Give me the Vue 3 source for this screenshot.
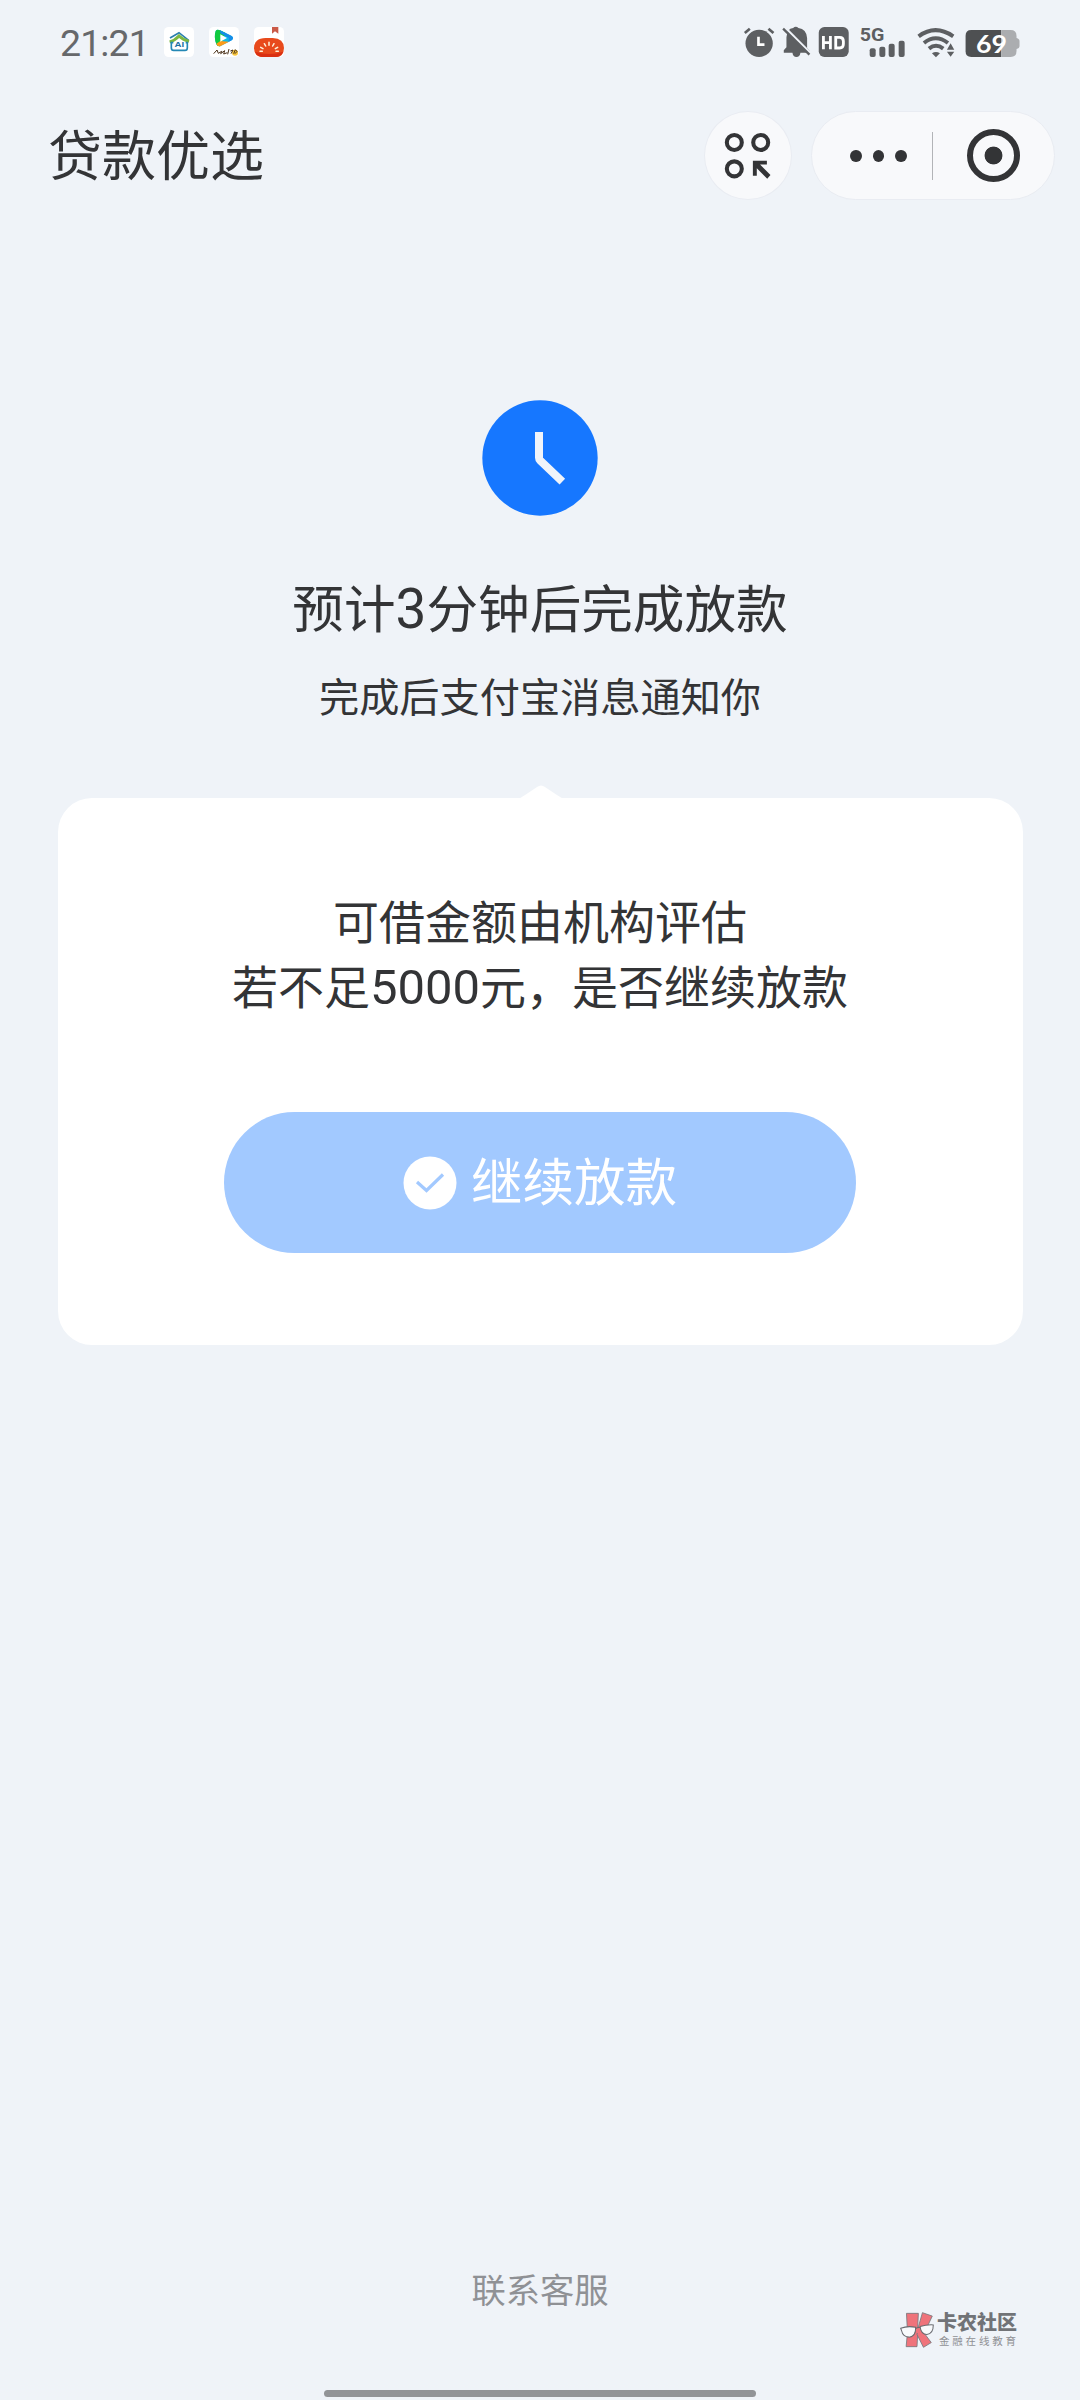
<script setup>
const title = '贷款优选'
const question = ['可借金额由机构评估']
</script>

<template>
  <div class="page">
    <div class="status">
      <span class="time">21:21</span>
      <div class="apps">
        <svg class="app" viewBox="0 0 90 90">
          <rect width="90" height="90" rx="14" fill="#fff" />
          <path d="M18 33 L45 17 L74 40" fill="none" stroke="#2b7fae" stroke-width="5" />
          <path d="M17 45 Q32 41 45 27 Q56 38 75 43" fill="none" stroke="#7cb842" stroke-width="9" />
          <path d="M28 47 H22 V62 Q22 70 29 70 H63 Q70 70 70 62 V47 H65" fill="none" stroke="#2488b5" stroke-width="5" />
          <text x="46" y="61" class="ai" textLength="29" lengthAdjust="spacingAndGlyphs">AI</text>
        </svg>
        <svg class="app" viewBox="0 0 90 90">
          <rect width="90" height="90" rx="14" fill="#fff" />
          <path d="M20 12 Q24 6 33 10 L68 27 Q76 33 68 40 L35 57 Q25 60 22 51 Q14 31 20 12Z" fill="#10b8e8" />
          <path d="M20 12 Q24 6 33 10 L50 18 L35 57 Q25 60 22 51 Q14 31 20 12Z" fill="#12c93f" />
          <path d="M22 50 Q25 60 35 57 L60 44 L34 42Z" fill="#ff9a17" />
          <path d="M33 10 L68 27 Q76 33 68 40 L58 45 L60 33 L34 19Z" fill="#168de8" />
          <path d="M34 22 L54 33 L34 44Z" fill="#fff" />
          <circle cx="78" cy="77" r="9" fill="#f7c53d" />
          <path d="M14 80 L24 69 L28 79 L38 73 L35 80 L47 71 L44 81 L55 77 M60 66 L56 82 M64 72 L72 69 L66 80 M74 80 L79 68 L84 73 L78 80" fill="none" stroke="#493018" stroke-width="3" />
        </svg>
        <svg class="app" viewBox="0 0 90 90">
          <rect width="90" height="90" rx="14" fill="#fff" />
          <path d="M54 0 H73 V20 L63 13 L54 20Z" fill="#ca5a48" />
          <path d="M0 64 Q0 34 35 33 H56 Q90 35 90 63 Q89 90 66 90 H24 Q1 89 0 64Z" fill="#e84a1c" />
          <path d="M3 74 Q9 90 27 90 H64 Q82 89 88 74 Q45 88 3 74Z" fill="#d92f12" />
          <path d="M45 46 V55 M31 50 L35 57 M60 50 L56 57 M20 61 L27 65 M71 61 L64 65 M18 73 H25 M73 73 H66" stroke="#fff3dc" stroke-width="4.500" stroke-linecap="round" />
        </svg>
      </div>

      <!-- alarm, muted bell, HD, 5G signal, wifi, battery -->
      <svg class="indicators" viewBox="40 45 830 100">
        <g fill="#5d5f62">
          <circle cx="88" cy="100" r="41" />
          <path d="M45 69 L60 56 M131 69 L116 56" stroke="#5d5f62" stroke-width="8" />
          <path d="M86 80 V104 H104" fill="none" stroke="#fff" stroke-width="8" />
          <path d="M162 128 V121 L170 112 V82 Q171 56 190 54 Q198 46 206 54 Q230 57 232 84 V114 L240 123 V128 H212 Q210 141 200 141 Q190 141 188 128Z" />
          <path d="M162 49 L246 133" stroke="#eff3f8" stroke-width="7" />
          <path d="M160 56 L239 134" stroke="#5d5f62" stroke-width="7" />
          <rect x="267" y="51" width="90" height="90" rx="17" />
          <path d="M281 78 V118 M302 78 V118 M281 98 H302 M318 82 H330 Q341 82 341 94 V102 Q341 114 330 114 H318Z" fill="none" stroke="#fff" stroke-width="8.500" />
          <text x="390" y="94" class="net" textLength="74" lengthAdjust="spacingAndGlyphs">5G</text>
          <rect x="420" y="115" width="18" height="26" rx="6" />
          <rect x="449" y="110" width="18" height="31" rx="6" />
          <rect x="477" y="101" width="18" height="40" rx="6" />
          <rect x="507" y="92" width="18" height="49" rx="6" />
        </g>
        <g fill="none" stroke="#5d5f62" stroke-width="12">
          <path d="M567 79 Q617 42 671 79" />
          <path d="M583 99 Q618 71 655 99" />
          <path d="M598 116 Q619 99 641 116" />
        </g>
        <path d="M607 130 Q619 122 631 130 L619 142Z" fill="#5d5f62" />
        <path d="M646 122 L663 93 L684 122 L663 146Z" fill="#eff3f8" />
        <path d="M652 119 L663 100 L674 119Z M652 125 H674 L663 140Z" fill="#5d5f62" />
        <path d="M725 60 H815 V141 H725 Q708 141 708 124 V77 Q708 60 725 60Z" fill="#4e5052" />
        <path d="M815 60 H843 Q861 60 861 78 V84 Q870 86 870 94 V108 Q870 115 861 117 V123 Q861 141 843 141 H815Z" fill="#abadb0" />
        <text x="739" y="128" class="battery" textLength="93" lengthAdjust="spacingAndGlyphs">69</text>
      </svg>
    </div>

    <header class="nav">
      <h1>{{ title }}</h1>
      <button class="round" aria-label="小程序">
        <svg viewBox="0 0 264 264">
          <g fill="none" stroke="#333436" stroke-width="12.500">
            <circle cx="90" cy="92" r="23" />
            <circle cx="171" cy="92" r="23" />
            <circle cx="90" cy="173" r="23" />
          </g>
          <path d="M147 148 H190 V160 H169 L201 192 L191 203 L159 171 V194 H147Z" fill="#333436" />
        </svg>
      </button>
      <div class="capsule">
        <span class="dots"><i></i><i></i><i></i></span>
        <span class="divider"></span>
        <span class="target"></span>
      </div>
    </header>

    <main>
      <svg class="clock" viewBox="0 0 348 348">
        <circle cx="174" cy="174" r="173" fill="#1677ff" />
        <path d="M171 96 V173 Q171 178 175 182 L241 245" fill="none" stroke="#f0f4fa" stroke-width="24" />
      </svg>
      <h2>预计<span class="num">3</span>分钟后完成放款</h2>
      <p class="sub">完成后支付宝消息通知你</p>

      <section class="card">
        <svg class="tip" viewBox="0 0 48 14"><path d="M0 14 Q4 13 8 10 L20 2 Q24 -1 28 2 L40 10 Q44 13 48 14Z" fill="#fff" /></svg>
        <p v-for="line in question" :key="line">{{ line }}</p>
        <p>若不足<span class="num">5000</span>元，是否继续放款</p>
        <button class="primary">
          <svg viewBox="0 0 54 54">
            <circle cx="27" cy="27" r="26.500" fill="#fff" />
            <path d="M14 26 L23.500 34.500 L40 18.500" fill="none" stroke="#a2c9ff" stroke-width="3.200" />
          </svg>
          <span>继续放款</span>
        </button>
      </section>
    </main>

    <footer>联系客服</footer>
    <div class="home"></div>

    <div class="mark">
      <svg viewBox="0 0 100 106">
        <g fill="#ef737b" stroke="#77797e" stroke-width="2.500">
          <path d="M19 4 H54 L52 46 V64 L50 102 H18 L22 60Z" />
          <path d="M66 2 L95 12 L78 48 L74 66 L92 90 L69 104 L50 66 L54 44Z" />
        </g>
        <path d="M45 46 H60 L56 62 H46Z" fill="#ef737b" />
        <g fill="#f8fafc" stroke="#686a6f" stroke-width="3">
          <path d="M2 48 Q22 40 46 45 Q47 72 27 74 Q8 73 5 56Z" />
          <path d="M59 43 Q77 37 98 38 Q98 64 79 66 Q62 66 59 43Z" />
          <path d="M46 49 Q52 44 59 46" fill="none" />
        </g>
      </svg>
      <div class="words">
        <b>卡农社区</b>
        <small>金融在线教育</small>
      </div>
    </div>
  </div>
</template>

<style>
body { margin: 0; background: #eff3f8; }
</style>

<style scoped>
.page {
  position: relative;
  width: 1080px;
  height: 2400px;
  display: flex;
  flex-direction: column;
  background: #eff3f8;
  color: #333436;
  font-family: "Noto Sans CJK SC", sans-serif;
  overflow: hidden;
}
h1, h2, p { margin: 0; font-weight: 400; white-space: nowrap; }
button { border: 0; padding: 0; font: inherit; }
svg { display: block; }

.status {
  height: 84px;
  box-sizing: border-box;
  padding: 0 60px 0 60px;
  display: flex;
  align-items: center;
}
.time {
  width: 104px;
  font: 400 37.500px/50px Roboto, sans-serif;
  letter-spacing: -0.9px;
  padding-top: 1px;
  color: #66686b;
}
.apps { display: flex; gap: 15px; }
.app { width: 30px; height: 30px; }
.ai { font: 700 19px "Liberation Sans", sans-serif; text-anchor: middle; fill: #1d6fa3; }
.indicators { width: 276.700px; height: 33.300px; margin-left: auto; }
.net { font: 700 53px Roboto, sans-serif; }
.battery { font: 700 73px Lato, sans-serif; fill: #fff; }

.nav {
  height: 143px;
  box-sizing: border-box;
  padding: 0 25px 0 48px;
  display: flex;
  align-items: center;
}
h1 { margin-right: auto; font-size: 54px; line-height: 80px; margin-top: -5px; }
.round, .capsule {
  box-sizing: border-box;
  height: 89px;
  background: #f8f9fb;
  border: 1px solid #e9ecf2;
}
.round { width: 88px; border-radius: 50%; margin-right: 19px; }
.round svg { width: 86px; height: 87px; }
.capsule {
  width: 244px;
  border-radius: 45px;
  display: flex;
  align-items: center;
  padding: 0 34px 0 38px;
}
.dots { display: flex; gap: 11px; }
.dots i { width: 11.500px; height: 12px; border-radius: 50%; background: #333436; }
.divider { width: 1px; height: 48px; margin-left: 25px; background: #b2b4b7; }
.target {
  box-sizing: border-box;
  width: 53px;
  height: 53px;
  margin-left: auto;
  border: 6px solid #333436;
  border-radius: 50%;
  background: radial-gradient(circle, #333436 8.500px, transparent 9.300px);
}

main {
  display: flex;
  flex-direction: column;
  align-items: center;
  padding-top: 173px;
}
.clock { width: 116px; height: 116px; }
.num { font-family: Roboto, sans-serif; font-size: 1.065em; line-height: 1; }
h2 { margin-top: 50px; font-size: 51.600px; line-height: 80px; }
.sub { margin-top: 19px; font-size: 40.200px; line-height: 60px; }
.card {
  position: relative;
  box-sizing: border-box;
  width: 965px;
  height: 547px;
  margin-top: 73px;
  padding-top: 89px;
  border-radius: 34px;
  background: #fff;
  display: flex;
  flex-direction: column;
  align-items: center;
}
.card p { font-size: 46px; line-height: 65px; }
.tip { position: absolute; top: -13px; left: 459px; width: 48px; height: 14px; }
.primary {
  width: 632px;
  height: 141px;
  margin-top: 95px;
  border-radius: 71px;
  background: #a2c9ff;
  color: #fff;
  font-size: 51.500px;
  line-height: 80px;
  display: flex;
  align-items: center;
  justify-content: center;
  gap: 14px;
}
.primary svg { width: 54px; height: 54px; }
.primary span { margin-top: -7px; }

footer {
  margin-top: auto;
  margin-bottom: 87px;
  text-align: center;
  font-size: 34.300px;
  line-height: 50px;
  color: #8f9195;
}
.home {
  position: absolute;
  left: 324px;
  bottom: 3px;
  width: 432px;
  height: 7px;
  border-radius: 4px;
  background: #929497;
}
.mark { position: absolute; left: 900px; top: 2312px; display: flex; gap: 3px; }
.mark svg { width: 34px; height: 36px; }
.words { display: flex; flex-direction: column; white-space: nowrap; }
.mark b { font-size: 20px; line-height: 20px; font-weight: 900; color: #717377; }
.mark small { margin: 3px 0 0 2px; font-size: 10.500px; line-height: 12px; letter-spacing: 2.800px; color: #8f9195; }
</style>
